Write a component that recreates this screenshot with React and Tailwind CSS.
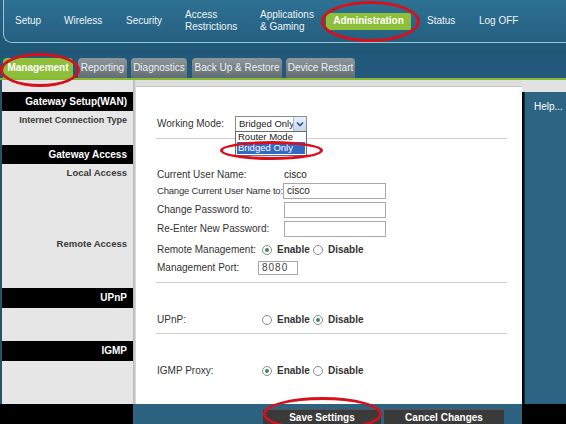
import React from "react";

const navItems = [
    { label: "Setup", w: "w-[49px]" },
    { label: "Wireless", w: "w-[62px]" },
    { label: "Security", w: "w-[59px]" },
    { label: ["Access", "Restrictions"], w: "w-[75px]" },
    { label: ["Applications", "& Gaming"], w: "w-[66px]" },
];

const tabs = [
    { label: "Management", w: "w-[70px]", active: true, ml: "ml-[3px]" },
    { label: "Reporting", w: "w-[49px]", ml: "ml-[5px]" },
    { label: "Diagnostics", w: "w-[56px]", ml: "ml-[4px]" },
    { label: "Back Up & Restore", w: "w-[90px]", ml: "ml-[5px]" },
    { label: "Device Restart", w: "w-[69px]", ml: "ml-[4px]" },
];

function Radio({ checked }) {
    return (
        <span className="w-[10px] h-[10px] rounded-full border border-[#8a8a8a] bg-white flex items-center justify-center">
            {checked && <span className="w-[4px] h-[4px] rounded-full bg-[#3a8a5c]" />}
        </span>
    );
}

function RadioPair({ enable }) {
    return (
        <div className="flex items-center">
            <Radio checked={enable} />
            <span className="ml-[5px] w-[36px] font-bold text-[#333]">Enable</span>
            <Radio checked={!enable} />
            <span className="ml-[5px] font-bold text-[#333]">Disable</span>
        </div>
    );
}

function TextBox({ value, w }) {
    return (
        <div className={`${w} h-[16px] border border-[#a8a8a8] bg-white pl-[3px] flex items-center text-[#222]`}>
            {value}
        </div>
    );
}

function SideHeader({ children, h }) {
    return (
        <div className={`${h} bg-black text-white font-bold text-[10px] flex items-center justify-end pr-[6px]`}>
            {children}
        </div>
    );
}

function Divider() {
    return <div className="ml-[20px] mr-[15px] h-px bg-[#cfcfcf]" />;
}

export default function App() {
    return (
        <div className="relative w-[566px] h-[424px] overflow-hidden bg-[#22597a] font-['Liberation_Sans',Arial,sans-serif] text-[10px] leading-[12px]">
            {/* top menu */}
            <div className="h-[53px] bg-gradient-to-b from-[#27668a] to-[#1f5675]">
                <div className="ml-[3px] h-[43px] border-l border-b border-[#9cc4d8] rounded-bl-[9px] bg-gradient-to-b from-[#2e7193] to-[#255f80] flex items-center pl-[11px] text-[#eef4f7]">
                    {navItems.map((item) => (
                        <div key={item.w} className={`${item.w} shrink-0`}>
                            {Array.isArray(item.label)
                                ? item.label.map((l) => <div key={l}>{l}</div>)
                                : item.label}
                        </div>
                    ))}
                    <div className="w-[85px] h-[17px] shrink-0 rounded-[2px] bg-[#8dbf3a] font-bold text-white flex items-center justify-center">
                        Administration
                    </div>
                    <div className="ml-[16px] w-[52px] shrink-0">Status</div>
                    <div className="shrink-0">Log OFF</div>
                </div>
            </div>

            {/* tabs */}
            <div className="h-[25px] flex items-end bg-[#22597a]">
                {tabs.map((t) => (
                    <div
                        key={t.label}
                        className={`${t.w} ${t.ml} h-[20px] shrink-0 rounded-t-[4px] flex items-center justify-center ${t.active
                            ? "bg-[#8dbf3a] text-white font-bold"
                            : "bg-gradient-to-b from-[#8d989d] to-[#616d72] text-[#eef2f4]"
                            }`}
                    >
                        {t.label}
                    </div>
                ))}
            </div>
            <div className="h-[2px] bg-[#86b933]" />

            {/* main */}
            <div className="flex h-[324px]">
                <div className="w-[133px] shrink-0 bg-[#e6e6e6] border-l-2 border-[#24536b] pt-[12px] flex flex-col">
                    <SideHeader h="h-[19px]">Gateway Setup(WAN)</SideHeader>
                    <div className="h-[34px] pt-[3px] pr-[6px] text-right text-[9px] font-bold text-[#3a3a3a]">
                        Internet Connection Type
                    </div>
                    <SideHeader h="h-[19px]">Gateway Access</SideHeader>
                    <div className="h-[124px] pt-[3px] pr-[6px] text-right text-[9.5px] font-bold text-[#3a3a3a]">
                        <div>Local Access</div>
                        <div className="mt-[59px]">Remote Access</div>
                    </div>
                    <SideHeader h="h-[20px]">UPnP</SideHeader>
                    <div className="h-[33px]" />
                    <SideHeader h="h-[20px]">IGMP</SideHeader>
                    <div className="flex-1" />
                </div>
                <div className="w-[3px] shrink-0 bg-gradient-to-r from-[#b5b5b5] to-[#dcdcdc]" />

                {/* form */}
                <div className="w-[386px] shrink-0 bg-[#dedede] pt-[6px] flex flex-col">
                    <div className="flex-1 bg-white border-t border-[#c9c9c9] text-[#333] whitespace-nowrap">
                        <div className="h-[27px]" />
                        <div className="h-[19px] pl-[21px] flex items-center">
                            <span className="w-[78px]">Working Mode:</span>
                            <div className="relative w-[72px] h-[16px] border border-[#8c8c8c] bg-white flex items-center pl-[3px] text-[9.5px] text-[#222]">
                                Bridged Only
                                <div className="absolute right-0 top-0 w-[13px] h-[14px] border-l border-[#a7bbd6] bg-gradient-to-b from-[#e8f0fb] to-[#c5d6ee] flex items-center justify-center">
                                    <svg width="8" height="6" viewBox="0 0 8 6">
                                        <path d="M1 1.5 L4 4.5 L7 1.5" fill="none" stroke="#2e4f8c" strokeWidth="1.6" />
                                    </svg>
                                </div>
                                <div className="absolute left-[-1px] top-[14px] w-[72px] border border-[#6b6b6b] bg-white z-10">
                                    <div className="h-[10px] pl-[2px] leading-[9px] text-[#222]">Router Mode</div>
                                    <div className="h-[12px] mx-px mb-px pl-[1px] bg-[#3169c6] text-white flex items-center">Bridged Only</div>
                                </div>
                            </div>
                        </div>
                        <div className="h-[5px]" />
                        <Divider />
                        <div className="h-[28px]" />
                        <div className="h-[15px] pl-[21px] flex items-center">
                            <span className="w-[127px]">Current User Name:</span>
                            <span className="text-[#222]">cisco</span>
                        </div>
                        <div className="h-[17px] pl-[21px] flex items-center">
                            <span className="w-[126px] shrink-0 overflow-visible text-[9.5px] tracking-[-0.2px]">Change Current User Name to:</span>
                            <TextBox w="w-[103px]" value="cisco" />
                        </div>
                        <div className="h-[2px]" />
                        <div className="h-[17px] pl-[21px] flex items-center">
                            <span className="w-[127px]">Change Password to:</span>
                            <TextBox w="w-[102px]" />
                        </div>
                        <div className="h-[2px]" />
                        <div className="h-[17px] pl-[21px] flex items-center">
                            <span className="w-[127px]">Re-Enter New Password:</span>
                            <TextBox w="w-[102px]" />
                        </div>
                        <div className="h-[4px]" />
                        <div className="h-[18px] pl-[21px] flex items-center">
                            <span className="w-[105px]">Remote Management:</span>
                            <RadioPair enable />
                        </div>
                        <div className="h-[18px] pl-[21px] flex items-center">
                            <span className="w-[101px]">Management Port:</span>
                            <div className="w-[40px] h-[14px] border border-[#a8a8a8] pl-[3px] flex items-center tracking-[1px] text-[#444]">
                                8080
                            </div>
                        </div>
                        <div className="h-[5px]" />
                        <Divider />
                        <div className="h-[28px]" />
                        <div className="h-[18px] pl-[21px] flex items-center">
                            <span className="w-[105px]">UPnP:</span>
                            <RadioPair />
                        </div>
                        <div className="h-[4px]" />
                        <Divider />
                        <div className="h-[28px]" />
                        <div className="h-[18px] pl-[21px] flex items-center">
                            <span className="w-[105px]">IGMP Proxy:</span>
                            <RadioPair enable />
                        </div>
                    </div>
                </div>

                {/* help */}
                <div className="w-[44px] shrink-0 bg-[#e2e2e2] pt-[12px] flex flex-col">
                    <div className="flex-1 flex">
                        <div className="w-[3px] bg-gradient-to-r from-black to-[#1a3c4f]" />
                        <div className="flex-1 bg-[#2e6483] pl-[9px] pt-[9px] text-white">Help...</div>
                    </div>
                </div>
            </div>

            {/* bottom bar */}
            <div className="flex h-[20px]">
                <div className="w-[133px] bg-black" />
                <div className="w-[389px] bg-[#2d6381] pt-[5px] pl-[130px] flex gap-[3px]">
                    <div className="w-[118px] h-[16px] bg-[#3a3a3a] border-t border-[#555] text-white font-bold flex items-center justify-center">
                        Save Settings
                    </div>
                    <div className="w-[120px] h-[16px] bg-[#3a3a3a] border-t border-[#555] text-white font-bold flex items-center justify-center">
                        Cancel Changes
                    </div>
                </div>
                <div className="flex-1 bg-black" />
            </div>

            {/* red highlight ellipses */}
            <div className="absolute left-[321px] top-[1px] w-[99px] h-[41px] rounded-[50%] border-[3px] border-[#d8101c]" />
            <div className="absolute left-[0px] top-[53px] w-[80px] h-[34px] rounded-[50%] border-[3px] border-[#d8101c]" />
            <div className="absolute left-[220px] top-[141px] w-[103px] h-[19px] rounded-[50%] border-[3px] border-[#d8101c] z-20" />
            <div className="absolute left-[263px] top-[397px] w-[119px] h-[34px] rounded-[50%] border-[3px] border-[#d8101c]" />
        </div>
    );
}
